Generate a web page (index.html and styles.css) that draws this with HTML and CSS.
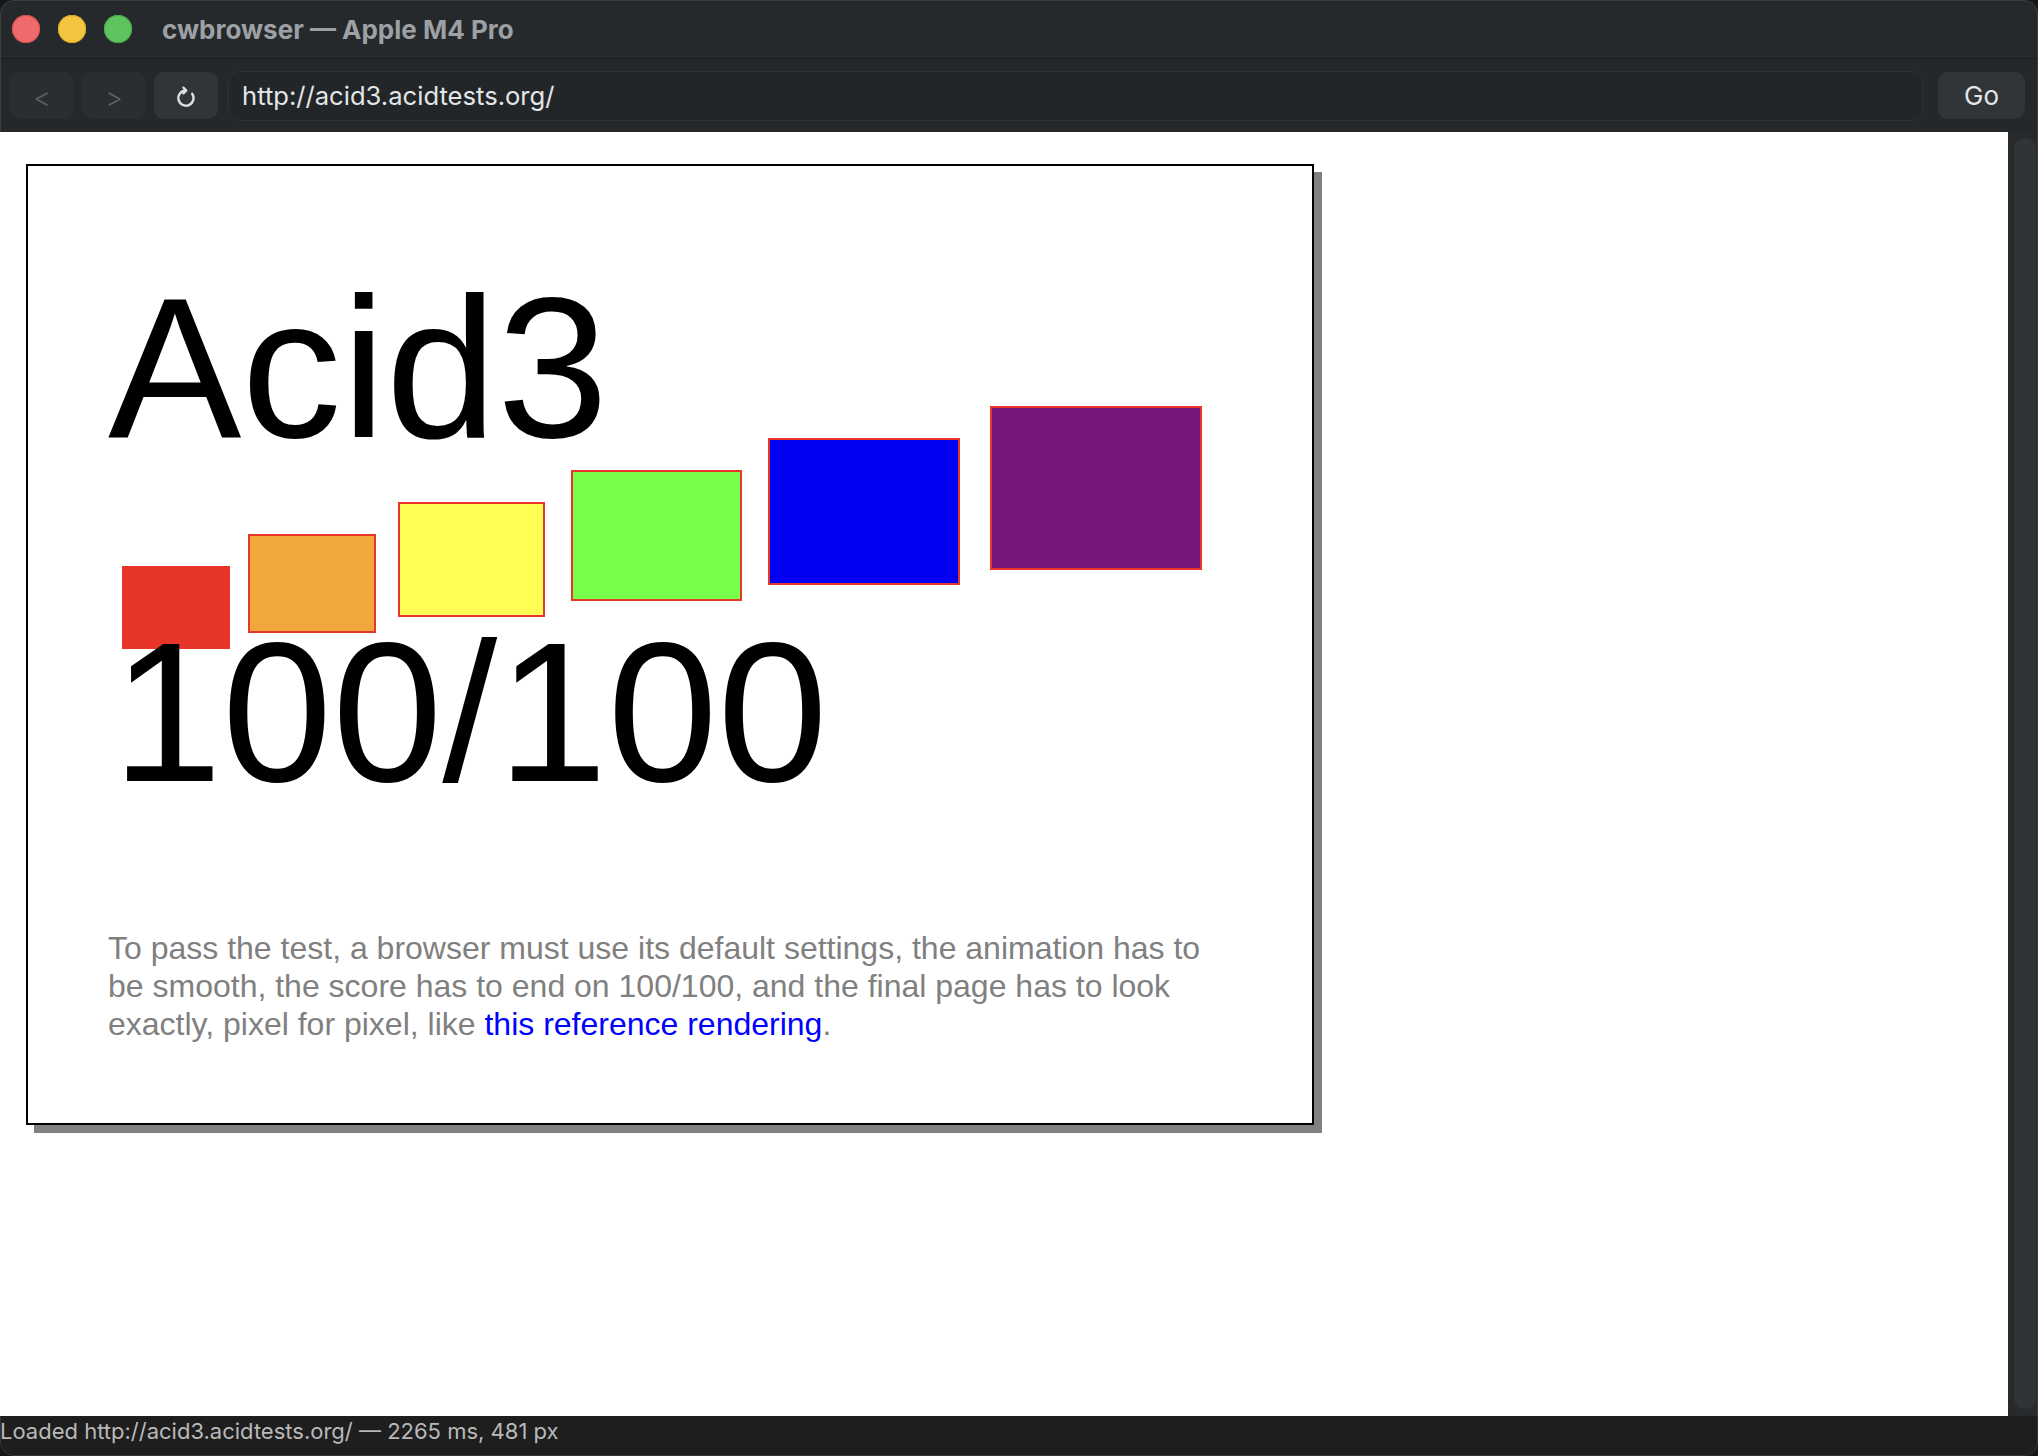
FILE: index.html
```html
<!DOCTYPE html>
<html lang="en">
<head>
<meta charset="utf-8">
<title>cwbrowser — Apple M4 Pro</title>
<link rel="stylesheet" href="styles.css">
</head>
<body>
<div class="window">
  <header class="titlebar">
    <div class="lights">
      <span class="light red"></span>
      <span class="light yellow"></span>
      <span class="light green"></span>
    </div>
    <div class="title">cwbrowser — Apple M4 Pro</div>
  </header>
  <nav class="toolbar">
    <button class="btn nav-btn" disabled>&lt;</button>
    <button class="btn nav-btn" disabled>&gt;</button>
    <button class="btn reload" aria-label="Reload">
      <svg width="26" height="26" viewBox="0 0 24 24" fill="none" stroke="currentColor" stroke-width="2.2" stroke-linecap="round" stroke-linejoin="round">
        <path d="M17.7 9 A7 7 0 1 1 12 6"/>
        <polyline points="9.6,3.4 12.2,6 9.6,8.6"/>
      </svg>
    </button>
    <div class="url">http://acid3.acidtests.org/</div>
    <button class="btn go">Go</button>
  </nav>
  <main class="viewport">
    <div class="page">
      <div class="acid">
        <h1 class="acid-title">Acid3</h1>
        <div class="boxes">
          <span class="box b1"></span>
          <span class="box b2"></span>
          <span class="box b3"></span>
          <span class="box b4"></span>
          <span class="box b5"></span>
          <span class="box b6"></span>
        </div>
        <div class="score">100/100</div>
        <p class="note">To pass the test, a browser must use its default settings, the animation has to be smooth, the score has to end on 100/100, and the final page has to look exactly, pixel for pixel, like <a href="#">this reference rendering</a>.</p>
      </div>
    </div>
    <div class="scrollbar"><div class="thumb"></div></div>
  </main>
  <footer class="status">Loaded http://acid3.acidtests.org/ — 2265 ms, 481 px</footer>
</div>
</body>
</html>
```

FILE: styles.css
```css
* { box-sizing: border-box; }
html, body { margin: 0; height: 100%; }
body {
  background: #161718;
  overflow: hidden;
  font-family: Inter, "Liberation Sans", sans-serif;
}
.window {
  position: relative;
  width: 2038px;
  height: 1456px;
  display: flex;
  flex-direction: column;
  background: #24282b;
  border-radius: 14px;
  overflow: hidden;
}
.window::after {
  content: "";
  position: absolute;
  inset: 0;
  border-radius: 14px;
  border: 1px solid rgba(255,255,255,0.10);
  pointer-events: none;
}
.titlebar {
  height: 59px;
  flex: none;
  display: flex;
  align-items: center;
  padding: 0 0 1px 12px;
  border-bottom: 1px solid #1b1e20;
  background: #25292c;
}
.lights { display: flex; gap: 18px; }
.light { width: 28px; height: 28px; border-radius: 50%; display: block; }
.light.red { background: #ef6a6a; box-shadow: inset 0 0 0 1px #d6504f; }
.light.yellow { background: #f4c53f; box-shadow: inset 0 0 0 1px #d9a92a; }
.light.green { background: #5fc460; box-shadow: inset 0 0 0 1px #45a945; }
.title {
  margin-left: 30px;
  font-weight: 700;
  font-size: 26px;
  color: #9da1a5;
  padding-top: 1px;
}
.toolbar {
  height: 73px;
  flex: none;
  display: flex;
  align-items: center;
  padding: 0 13px 0 10px;
  gap: 8px;
  background: #24282b;
}
.btn {
  height: 47px;
  border: none;
  border-radius: 10px;
  font-family: Inter, "Liberation Sans", sans-serif;
  display: flex;
  align-items: center;
  justify-content: center;
  padding: 0;
}
.nav-btn {
  width: 64px;
  background: #2a2e31;
  color: #5d6164;
  font-size: 27px;
  font-weight: 300;
  padding-top: 3px;
}
.reload {
  width: 64px;
  background: #313538;
  color: #dcdedf;
  padding-top: 2px;
}
.url {
  flex: 1;
  height: 50px;
  margin-left: 2px;
  border: 1.5px solid #2f3336;
  border-radius: 11px;
  background: #222629;
  color: #e4e5e6;
  font-size: 25.6px;
  display: flex;
  align-items: center;
  padding: 0 14px 1px 13px;
}
.go {
  width: 87px;
  margin-left: 7px;
  background: #313538;
  color: #e4e5e6;
  font-size: 26px;
}
.viewport {
  flex: 1;
  display: flex;
  min-height: 0;
}
.page {
  flex: 1;
  background: #ffffff;
  overflow: hidden;
  padding: 32px 0 0 26px;
}
.scrollbar {
  width: 30px;
  flex: none;
  background: #262a2d;
  padding: 6px 2px 7px 6px;
}
.thumb {
  height: 100%;
  border-radius: 11px;
  background: #2f3437;
}
.acid {
  width: 1288px;
  height: 961px;
  border: 2px solid #000;
  box-shadow: 8px 8px 0 #808080;
  background: #fff;
  padding: 102px 80px 0 80px;
  font-family: "Liberation Sans", Arial, sans-serif;
  color: #000;
}
.acid-title {
  margin: 0 0 -62px;
  font: 400 200px/200px "Liberation Sans", Arial, sans-serif;
}
.boxes {
  display: flex;
  align-items: flex-start;
}
.box { display: block; flex: none; border: 2px solid #e8372a; }
.b1 { width: 108px; height: 83px; margin: 160px 0 0 14px; background: #e8352a; border: none; }
.b2 { width: 128px; height: 99px; margin: 128px 0 0 18px; background: #f0a83c; }
.b3 { width: 147px; height: 115px; margin: 96px 0 0 22px; background: #ffff55; }
.b4 { width: 171px; height: 131px; margin: 64px 0 0 26px; background: #78ff4c; }
.b5 { width: 192px; height: 147px; margin: 32px 0 0 26px; background: #0000f5; }
.b6 { width: 212px; height: 164px; margin: 0 0 0 30px; background: #76167a; }
.score {
  margin: -35px 0 0 4px;
  font: 400 198px/198px "Liberation Sans", Arial, sans-serif;
}
.note {
  margin: 117px 0 0;
  font-size: 32px;
  line-height: 38px;
  color: #808080;
}
.note a { color: #0000ff; text-decoration: none; }
.status {
  height: 40px;
  flex: none;
  background: #1e1e1e;
  color: #b9b9b9;
  font-size: 22px;
  line-height: 30px;
  white-space: nowrap;
}
```
